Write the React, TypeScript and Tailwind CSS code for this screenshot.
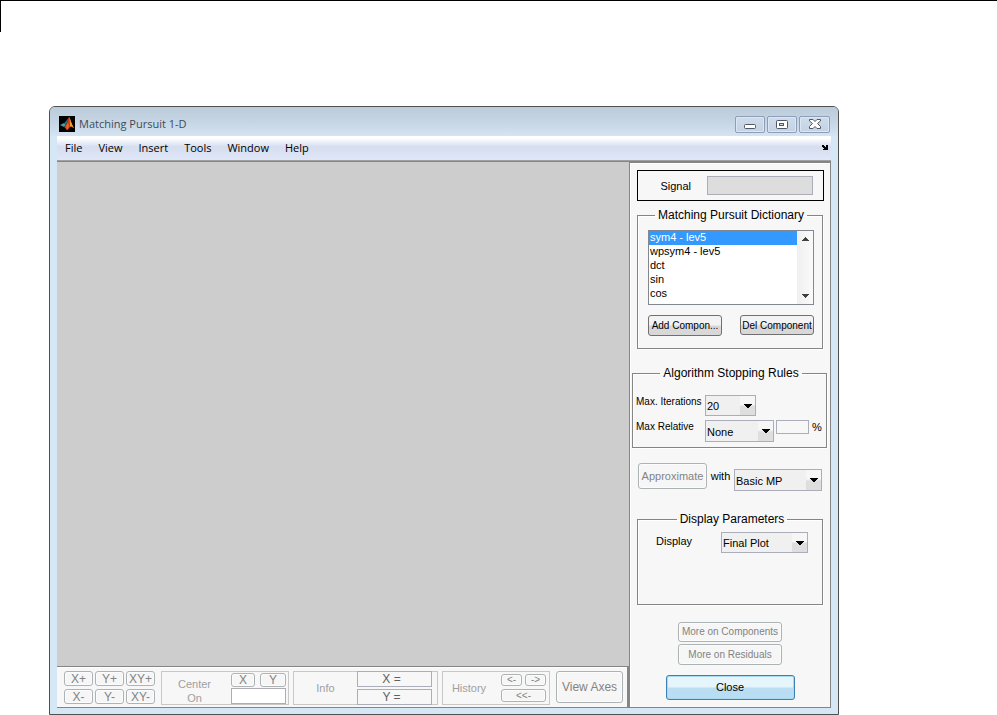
import React from "react";

const disabledButton =
  "flex items-center justify-center whitespace-nowrap rounded-[3px] border border-[#adb2b5] bg-[#f6f6f6] text-[#838383] shadow-[inset_0_0_0_1px_#fcfcfc]";
const panelButton =
  "flex items-center justify-center whitespace-nowrap rounded-[3px] border border-[#707070] bg-linear-to-b from-[#f3f3f3] from-45% to-[#d8d8d8] to-55% text-[10px] leading-[13px] text-black";
const groupBox = "min-w-0 border border-[#858585] shadow-[1px_1px_0_#fff,inset_1px_1px_0_#fff]";
const groupTitle = "mx-auto px-[3px] text-[12px] leading-[14px]";

function Dropdown({ id, options, size }: { id: string; options: string[]; size: string }) {
  return (
    <span className={`relative flex shrink-0 ${size}`}>
      <select
        id={id}
        className="w-full appearance-none border border-[#abadb8] bg-[#f0f0f0] pt-[2px] pl-px text-[11px] leading-[13px] text-black"
      >
        {options.map((o) => (
          <option key={o}>{o}</option>
        ))}
      </select>
      <span className="pointer-events-none absolute inset-y-px right-px flex w-[15px] items-center justify-center bg-linear-to-b from-[#f6f6f6] from-45% to-[#dedede] to-55%">
        <svg width="8" height="4" viewBox="0 0 8 4" shapeRendering="crispEdges">
          <path d="M0 0h8v1H7v1H6v1H5v1H3V3H2V2H1V1H0z" />
        </svg>
      </span>
    </span>
  );
}

function MatlabIcon() {
  return (
    <svg width="16" height="16" viewBox="0 0 16 16">
      <rect width="16" height="16" fill="#000" />
      <path d="M1 9l4-2 2 2-2 2z" fill="#3aa0b8" />
      <path d="M5 7c2-1 3-4 5-5L7 9z" fill="#2f6f8c" />
      <path d="M5 11c1 0 2-2 3-4 1-3 1-5 2-6 1 0 2 6 5 11-2-1-3-2-4-1s-2 3-3 3-1-2-3-3z" fill="#c73a10" />
      <path d="M10 1c1 1 2 6 5 11-2-1-3-2-4-1 0-3 0-7-1-10z" fill="#f0a030" />
      <path d="M7 10l2-4 1 5-2 3z" fill="#e8641c" />
    </svg>
  );
}

function TitleBar() {
  const control =
    "flex h-[17px] items-center justify-center rounded-[2px] border border-[#8e9db8] bg-linear-to-b from-[#cfdcea] to-[#c3d3e4] shadow-[inset_0_0_0_1px_#dce7f3]";
  return (
    <header className="flex h-[29px] items-center pr-px pl-[2px] pt-[5px]">
      <MatlabIcon />
      <h1 className="ml-[4px] flex-1 font-['Open_Sans',sans-serif] text-[11px] leading-[16px] text-[#3f4a58]">
        Matching Pursuit 1-D
      </h1>
      <div className="flex gap-[2px]">
        <button aria-label="Minimize" className={`${control} w-[30px] pt-[4px]`}>
          <svg width="12" height="5" viewBox="0 0 12 5">
            <rect x="0.5" y="0.5" width="11" height="4" rx="1" fill="#fff" stroke="#535666" />
          </svg>
        </button>
        <button aria-label="Maximize" className={`${control} w-[30px]`}>
          <svg width="12" height="9" viewBox="0 0 12 9">
            <rect x="1" y="1" width="10" height="7" fill="#fff" />
            <rect x="0.5" y="0.5" width="11" height="8" rx="1" fill="none" stroke="#535666" />
            <rect x="3.5" y="3.5" width="4" height="2" fill="#cfdcea" stroke="#535666" />
          </svg>
        </button>
        <button aria-label="Close window" className={`${control} w-[31px]`}>
          <svg width="12" height="10" viewBox="0 0 12 10">
            <path
              d="M0.5 0.5h3.500l2 2 2-2h3.500v1.500L8.500 4.500l3 3v2H8l-2-2-2 2H0.500v-2l3-3-3-2.500z"
              fill="#fff"
              stroke="#535666"
            />
          </svg>
        </button>
      </div>
    </header>
  );
}

function MenuBar() {
  return (
    <nav className="flex h-[25px] items-center border-b border-[#a0a0a0] bg-linear-to-b from-white from-10% via-[#d5ddef] via-45% to-[#e0e7f8] pr-[3px] pb-px pl-[8px]">
      <div className="flex flex-1 gap-[16px] font-['Open_Sans',sans-serif] text-[11px] leading-[15px] text-black">
        {["File", "View", "Insert", "Tools", "Window", "Help"].map((m) => (
          <button key={m}>{m}</button>
        ))}
      </div>
      <button aria-label="Dock figure">
        <svg width="7" height="5" viewBox="0 0 7 5" shapeRendering="crispEdges">
          <path d="M1 0h2v1h1v1h1V0h2v5H2V4h1V3H2V2H1V1H0z" />
        </svg>
      </button>
    </nav>
  );
}

function Toolbar() {
  const box = "flex h-[34px] border border-[#c8c8c8]";
  const zoomKeys = ["X+", "Y+", "XY+", "X-", "Y-", "XY-"];
  return (
    <section
      aria-label="Axes controls"
      className="flex h-[41px] items-start border-t border-r-2 border-[#858585] bg-[#f7f7f7] pt-[4px] pr-[4px] pl-[7px] text-[12px] leading-[14px] text-[#a0a0a0] shadow-[inset_0_1px_0_#fff]"
    >
      <div className="grid grid-cols-3 gap-x-[2px] gap-y-[3px]">
        {zoomKeys.map((k) => (
          <button key={k} disabled className={`${disabledButton} h-[15px] w-[29px]`}>
            {k}
          </button>
        ))}
      </div>
      <div className={`${box} ml-[6px] w-[128px] shrink-0 pr-[2px]`}>
        <label htmlFor="center" className="flex-1 pt-[5px] pr-[4px] text-center text-[11px]">
          Center
          <br />
          On
        </label>
        <div className="w-[55px] pt-px">
          <div className="flex justify-between">
            <button disabled className={`${disabledButton} h-[14px] w-[24px]`}>X</button>
            <button disabled className={`${disabledButton} h-[14px] w-[26px]`}>Y</button>
          </div>
          <input id="center" className="mt-px block h-[16px] w-full border border-[#abadb3] bg-white px-1 text-[11px]" />
        </div>
      </div>
      <div className={`${box} ml-[4px] min-w-0 flex-1 pr-[5px]`}>
        <span className="flex flex-1 items-center justify-center text-[11px]">Info</span>
        <div className="-my-px flex w-[75px] flex-col gap-[2px]">
          <output className="flex h-[16px] items-center justify-center border border-[#abadb8] pr-[6px] text-[#606060]">X =</output>
          <output className="flex h-[16px] items-center justify-center border border-[#abadb8] pr-[6px] text-[#606060]">Y =</output>
        </div>
      </div>
      <div className={`${box} ml-[4px] w-[108px] shrink-0 pr-[3px]`}>
        <span className="flex flex-1 items-center justify-center pr-[6px] text-[11px]">History</span>
        <div className="grid w-[45px] grid-cols-2 content-start gap-[3px] pt-[2px] text-[10px] leading-[10px]">
          <button disabled className={`${disabledButton} h-[12px]`}>&lt;-</button>
          <button disabled className={`${disabledButton} h-[12px]`}>-&gt;</button>
          <button disabled className={`${disabledButton} col-span-2 h-[13px]`}>&lt;&lt;-</button>
        </div>
      </div>
      <button disabled className={`${disabledButton} ml-[6px] h-[32px] w-[67px]`}>
        View Axes
      </button>
    </section>
  );
}

function DictionaryGroup() {
  return (
    <fieldset className={`${groupBox} mx-[7px] mt-[7px] h-[141px] pr-[8px] pl-[10px]`}>
      <legend className={groupTitle}>Matching Pursuit Dictionary</legend>
      <div className="mt-[8px] flex h-[75px] border border-[#828790] bg-white">
        <select
          size={5}
          defaultValue="sym4 - lev5"
          aria-label="Dictionary components"
          className="h-full min-w-0 flex-1 overflow-hidden bg-white text-[11px] leading-[14px] text-black outline-none"
        >
          {["sym4 - lev5", "wpsym4 - lev5", "dct", "sin", "cos"].map((c) => (
            <option
              key={c}
              className="h-[14px] min-h-0 p-0 pl-px leading-[14px] checked:bg-[#3399ff] checked:bg-linear-to-b checked:from-[#3399ff] checked:to-[#3399ff] checked:text-white"
            >
              {c}
            </option>
          ))}
        </select>
        <div className="flex w-[16px] flex-col items-center justify-between bg-linear-to-r from-[#f0f0f0] to-[#fafafa] py-[6px]">
          <svg width="7" height="4" viewBox="0 0 7 4" shapeRendering="crispEdges">
            <path d="M3 0h1v1h1v1h1v1h1v1H0V3h1V2h1V1h1z" fill="#404040" />
          </svg>
          <svg width="7" height="4" viewBox="0 0 7 4" shapeRendering="crispEdges">
            <path d="M0 0h7v1H6v1H5v1H4v1H3V3H2V2H1V1H0z" fill="#404040" />
          </svg>
        </div>
      </div>
      <div className="mt-[10px] flex justify-between">
        <button className={`${panelButton} h-[21px] w-[74px]`}>Add Compon...</button>
        <button className={`${panelButton} h-[20px] w-[74px]`}>Del Component</button>
      </div>
    </fieldset>
  );
}

function StoppingGroup() {
  return (
    <fieldset className={`${groupBox} mr-[3px] ml-[2px] mt-[17px] h-[82px] pl-[3px]`}>
      <legend className={groupTitle}>Algorithm Stopping Rules</legend>
      <div className="mt-[15px] flex items-start">
        <label htmlFor="iterations" className="w-[69px] whitespace-nowrap text-[10px] leading-[14px]">
          Max. Iterations
        </label>
        <Dropdown id="iterations" options={["20", "50", "100"]} size="h-[21px] w-[51px]" />
      </div>
      <div className="mt-[4px] flex items-start">
        <label htmlFor="relative" className="w-[69px] whitespace-nowrap text-[10px] leading-[14px]">
          Max Relative
        </label>
        <Dropdown id="relative" options={["None", "L2", "L1"]} size="h-[22px] w-[69px]" />
        <input
          aria-label="Relative error percent"
          className="ml-[2px] h-[14px] w-[33px] border border-[#abadb8] bg-[#f7f7f7] px-px text-[11px]"
        />
        <span className="ml-[3px]">%</span>
      </div>
    </fieldset>
  );
}

function SidePanel() {
  return (
    <aside className="w-[202px] shrink-0 border border-[#858585] bg-[#f7f7f7] pt-[7px] text-[11px] leading-[14px] text-black shadow-[inset_1px_1px_0_#fff]">
      <div className="mr-[6px] ml-[7px] flex h-[31px] items-center justify-end gap-[16px] border border-black pr-[10px]">
        <label htmlFor="signal">Signal</label>
        <input id="signal" className="h-[19px] w-[106px] border border-[#abadb8] bg-[#dddddd] px-1" />
      </div>
      <DictionaryGroup />
      <StoppingGroup />
      <div className="mt-[15px] flex items-start px-[8px]">
        <button disabled className={`${disabledButton} h-[26px] w-[69px] text-[11px]`}>
          Approximate
        </button>
        <label htmlFor="method" className="mt-[6px] flex-1 text-center">
          with
        </label>
        <Dropdown
          id="method"
          options={["Basic MP", "Orthogonal MP", "Weak MP"]}
          size="mt-[6px] h-[22px] w-[88px]"
        />
      </div>
      <fieldset className={`${groupBox} mx-[7px] mt-[21px] h-[93px] pr-[14px] pl-[18px]`}>
        <legend className={groupTitle}>Display Parameters</legend>
        <div className="mt-[6px] flex items-start justify-between">
          <label htmlFor="display" className="mt-[2px]">Display</label>
          <Dropdown id="display" options={["Final Plot", "Stepwise", "None"]} size="h-[21px] w-[87px]" />
        </div>
      </fieldset>
      <div className="mt-[17px] mb-[7px] flex flex-col items-center gap-[2px]">
        <button disabled className={`${disabledButton} h-[20px] w-[104px] text-[10px]`}>
          More on Components
        </button>
        <button disabled className={`${disabledButton} h-[21px] w-[104px] text-[10px]`}>
          More on Residuals
        </button>
        <button className="mt-[8px] h-[25px] w-[129px] rounded-[3px] border border-[#3c7fb1] bg-linear-to-b from-[#e6f5fc] from-45% to-[#b9ddf2] to-55% text-[11px] leading-[13px] text-black shadow-[inset_0_0_0_1px_#a9dbf3]">
          Close
        </button>
      </div>
    </aside>
  );
}

export default function App() {
  return (
    <main className="border-t border-black bg-white pr-[158px] font-['Liberation_Sans',Arial,sans-serif]">
      <div className="h-[31px] border-l border-black" />
      <div className="mt-[74px] ml-[49px] rounded-t-[6px] border border-[#505050] bg-[#d5e6f5] px-[7px] pb-[6px]">
        <div className="-mx-[7px] rounded-t-[5px] bg-linear-to-b from-[#bccbd9] via-[#c5d5e4] to-[#d5e4f3] px-[7px]">
          <TitleBar />
        </div>
        <MenuBar />
        <div className="flex border-t border-[#858585] bg-[#f7f7f7]">
          <div className="flex min-w-0 flex-1 flex-col border-b border-[#858585]">
            <div className="flex-1 bg-[#cdcdcd]" />
            <Toolbar />
          </div>
          <SidePanel />
        </div>
      </div>
    </main>
  );
}
